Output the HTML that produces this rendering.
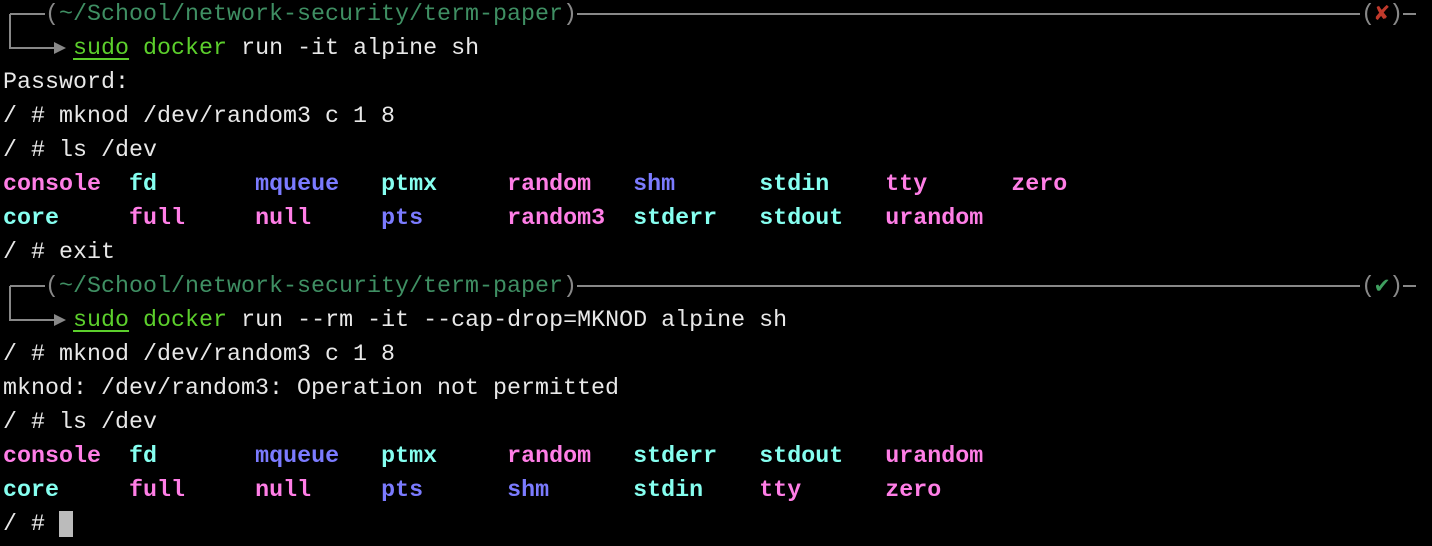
<html><head><style>
body{margin:0;background:#000;width:1432px;height:546px;overflow:hidden;position:relative}
pre{margin:0;position:absolute;left:3px;top:-3px;font-family:"Liberation Mono","DejaVu Sans Mono",monospace;font-size:23.3px;line-height:34px;color:#e8e8e8;letter-spacing:0.02px}
.g{color:#3f8f63}.s{color:#5ccf2c}.u{text-decoration:underline;text-decoration-thickness:2px;text-underline-offset:4px}
.p{color:#ff7ee6;font-weight:bold}.c{color:#86fff0;font-weight:bold}.b{color:#7b7bff;font-weight:bold}
.gr{color:#888}.r{color:#c0392b;font-weight:bold}.ok{color:#3f9f5f;font-weight:bold}
svg{position:absolute;left:0;top:0}
</style></head><body>
<svg width="1432" height="546" stroke="#888" stroke-width="2" fill="none">
<path d="M10 14H45M577 14H1360M1403 14H1416M10 14V48H60"/>
<path d="M10 286H45M577 286H1360M1403 286H1416M10 286V320H60"/>
<path d="M54 42L66 48L54 54Z" fill="#888" stroke="none"/>
<path d="M54 314L66 320L54 326Z" fill="#888" stroke="none"/>
</svg>
<pre>   <span class="gr">(</span><span class="g">~/School/network-security/term-paper</span><span class="gr">)</span>                                                        <span class="gr">(</span><span class="r">✘</span><span class="gr">)</span>
     <span class="s u">sudo</span> <span class="s">docker</span> run -it alpine sh
Password:
/ # mknod /dev/random3 c 1 8
/ # ls /dev
<span class="p">console</span>  <span class="c">fd</span>       <span class="b">mqueue</span>   <span class="c">ptmx</span>     <span class="p">random</span>   <span class="b">shm</span>      <span class="c">stdin</span>    <span class="p">tty</span>      <span class="p">zero</span>
<span class="c">core</span>     <span class="p">full</span>     <span class="p">null</span>     <span class="b">pts</span>      <span class="p">random3</span>  <span class="c">stderr</span>   <span class="c">stdout</span>   <span class="p">urandom</span>
/ # exit
   <span class="gr">(</span><span class="g">~/School/network-security/term-paper</span><span class="gr">)</span>                                                        <span class="gr">(</span><span class="ok">✔</span><span class="gr">)</span>
     <span class="s u">sudo</span> <span class="s">docker</span> run --rm -it --cap-drop=MKNOD alpine sh
/ # mknod /dev/random3 c 1 8
mknod: /dev/random3: Operation not permitted
/ # ls /dev
<span class="p">console</span>  <span class="c">fd</span>       <span class="b">mqueue</span>   <span class="c">ptmx</span>     <span class="p">random</span>   <span class="c">stderr</span>   <span class="c">stdout</span>   <span class="p">urandom</span>
<span class="c">core</span>     <span class="p">full</span>     <span class="p">null</span>     <span class="b">pts</span>      <span class="b">shm</span>      <span class="c">stdin</span>    <span class="p">tty</span>      <span class="p">zero</span>
/ # <span style="background:#bbb;color:#bbb"> </span></pre>
</body></html>
